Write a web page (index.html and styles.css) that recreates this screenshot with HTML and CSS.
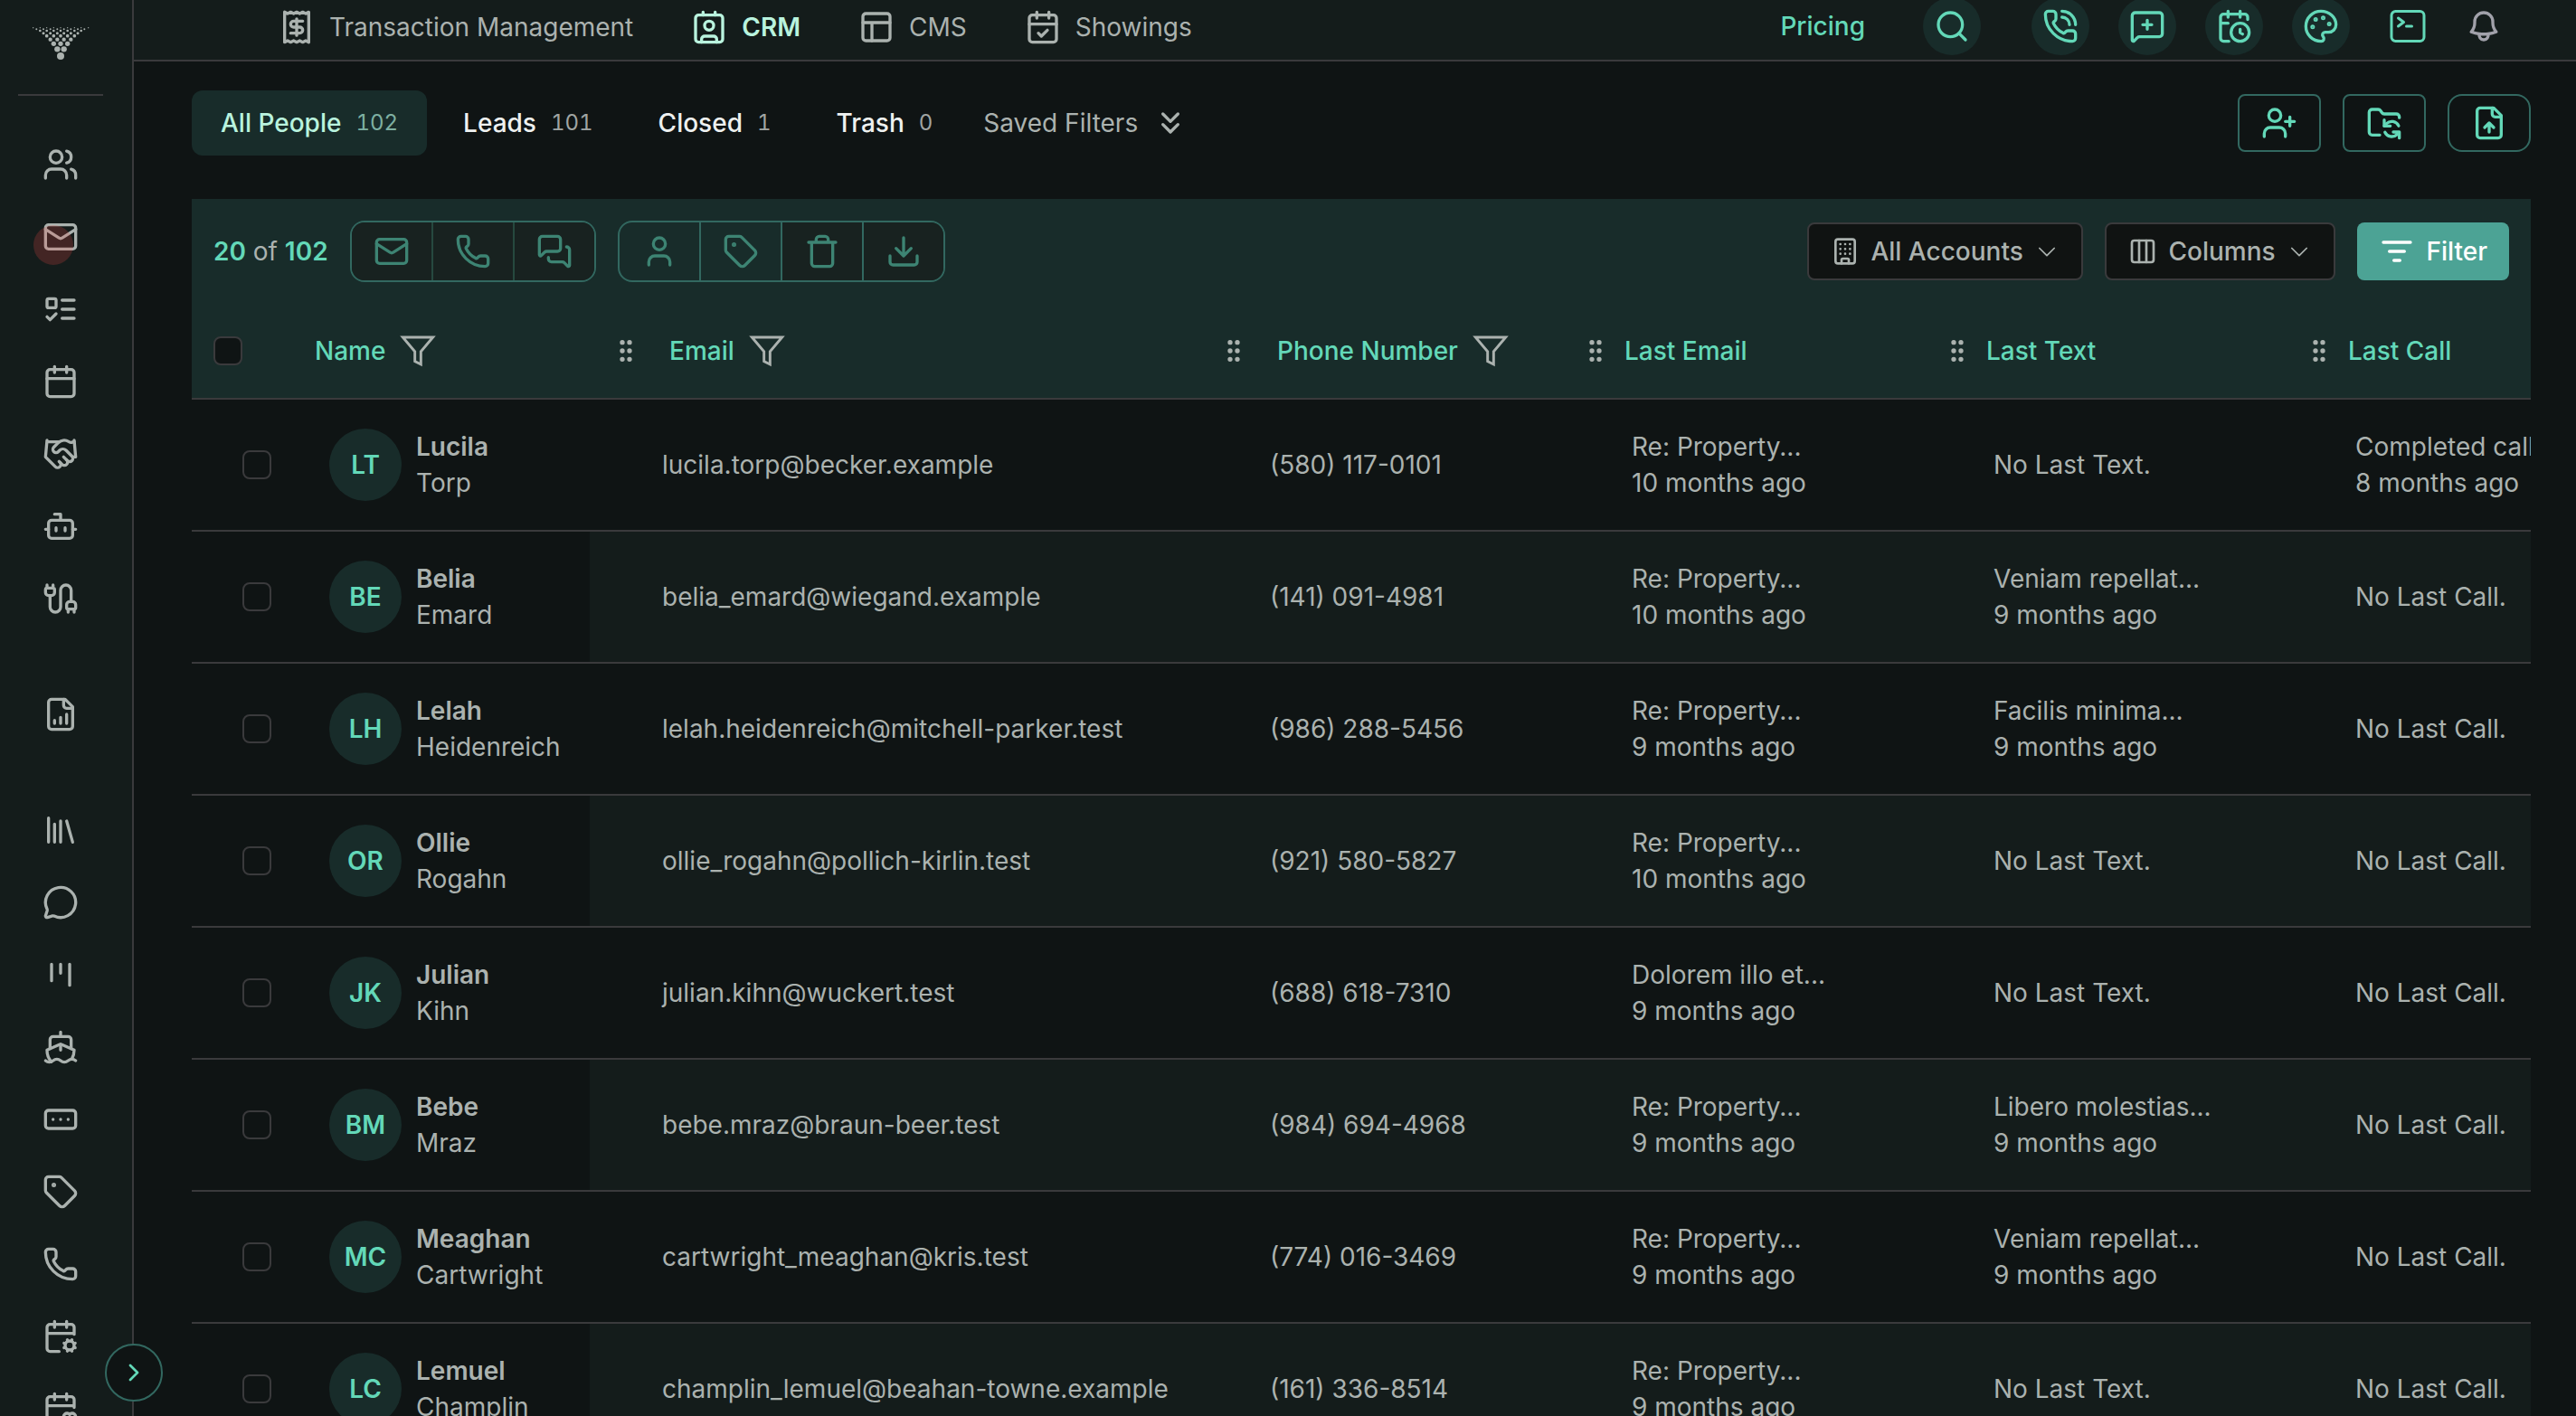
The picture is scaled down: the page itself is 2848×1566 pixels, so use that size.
FILE: index.html
```html
<!DOCTYPE html>
<html lang="en">
<head>
  <meta charset="UTF-8">
  <meta name="viewport" content="width=device-width, initial-scale=1.0">
  <title>CRM - People</title>
  <link rel="stylesheet" href="styles.css">
</head>
<body>
  <!-- icon sprite -->
  <svg class="sprite" aria-hidden="true">
    <symbol id="users" viewBox="0 0 24 24"><path d="M16 21v-2a4 4 0 0 0-4-4H6a4 4 0 0 0-4 4v2"/><circle cx="9" cy="7" r="4"/><path d="M22 21v-2a4 4 0 0 0-3-3.87M16 3.13a4 4 0 0 1 0 7.75"/></symbol>
    <symbol id="mail" viewBox="0 0 24 24"><rect x="2" y="4" width="20" height="16" rx="2"/><path d="m22 7-8.97 5.7a1.94 1.94 0 0 1-2.06 0L2 7"/></symbol>
    <symbol id="list-todo" viewBox="0 0 24 24"><rect x="3" y="5" width="6" height="6" rx="1"/><path d="m3 17 2 2 4-4M13 6h8M13 12h8M13 18h8"/></symbol>
    <symbol id="calendar" viewBox="0 0 24 24"><path d="M8 2v4M16 2v4M3 10h18"/><rect x="3" y="4" width="18" height="18" rx="2"/></symbol>
    <symbol id="handshake" viewBox="0 0 24 24"><path d="m11 17 2 2a1 1 0 1 0 3-3"/><path d="m14 14 2.5 2.5a1 1 0 1 0 3-3l-3.88-3.88a3 3 0 0 0-4.24 0l-.88.88a1 1 0 1 1-3-3l2.81-2.81a5.79 5.79 0 0 1 7.06-.87l.47.28a2 2 0 0 0 1.42.25L21 4"/><path d="m21 3 1 11h-2M3 3 2 14l6.5 6.5a1 1 0 1 0 3-3M3 4h8"/></symbol>
    <symbol id="bot" viewBox="0 0 24 24"><path d="M12 8V4H8"/><rect x="4" y="8" width="16" height="12" rx="2"/><path d="M2 14h2M20 14h2M15 13v2M9 13v2"/></symbol>
    <symbol id="cable" viewBox="0 0 24 24"><path d="M17 19a1 1 0 0 1-1-1v-2a2 2 0 0 1 2-2h2a2 2 0 0 1 2 2v2a1 1 0 0 1-1 1z"/><path d="M17 21v-2M19 14V6.5a1 1 0 0 0-7 0v11a1 1 0 0 1-7 0V10M21 21v-2M3 5V3"/><path d="M4 10a2 2 0 0 1-2-2V6a1 1 0 0 1 1-1h4a1 1 0 0 1 1 1v2a2 2 0 0 1-2 2zM7 5V3"/></symbol>
    <symbol id="file-chart" viewBox="0 0 24 24"><path d="M15 2H6a2 2 0 0 0-2 2v16a2 2 0 0 0 2 2h12a2 2 0 0 0 2-2V7Z"/><path d="M14 2v4a2 2 0 0 0 2 2h4M8 18v-2M12 18v-4M16 18v-6"/></symbol>
    <symbol id="library" viewBox="0 0 24 24"><path d="m16 6 4 14M12 6v14M8 8v12M4 4v16"/></symbol>
    <symbol id="message" viewBox="0 0 24 24"><path d="M2.992 16.342a2 2 0 0 1 .094 1.167l-1.065 3.29a1 1 0 0 0 1.236 1.168l3.413-.998a2 2 0 0 1 1.099.092 10 10 0 1 0-4.777-4.719"/></symbol>
    <symbol id="kanban" viewBox="0 0 24 24"><path d="M6 5v11M12 5v6M18 5v14"/></symbol>
    <symbol id="ship" viewBox="0 0 24 24"><path d="M12 10.189V14M12 2v3M19 13V7a2 2 0 0 0-2-2H7a2 2 0 0 0-2 2v6"/><path d="M19.38 20A11.6 11.6 0 0 0 21 14l-8.188-3.639a2 2 0 0 0-1.624 0L3 14a11.6 11.6 0 0 0 2.81 7.76"/><path d="M2 21c.6.5 1.2 1 2.5 1 2.5 0 2.5-2 5-2 1.3 0 1.9.5 2.5 1s1.2 1 2.5 1c2.5 0 2.5-2 5-2 1.3 0 1.9.5 2.5 1"/></symbol>
    <symbol id="ellipsis-box" viewBox="0 0 24 24"><rect x="2" y="6" width="20" height="12" rx="2"/><path d="M12 12h.01M17 12h.01M7 12h.01"/></symbol>
    <symbol id="tag" viewBox="0 0 24 24"><path d="M12.586 2.586A2 2 0 0 0 11.172 2H4a2 2 0 0 0-2 2v7.172a2 2 0 0 0 .586 1.414l8.704 8.704a2.426 2.426 0 0 0 3.42 0l6.58-6.58a2.426 2.426 0 0 0 0-3.42z"/><circle cx="7.5" cy="7.5" r=".5" fill="currentColor"/></symbol>
    <symbol id="phone" viewBox="0 0 24 24"><path d="M13.832 16.568a1 1 0 0 0 1.213-.303l.355-.465A2 2 0 0 1 17 15h3a2 2 0 0 1 2 2v3a2 2 0 0 1-2 2A18 18 0 0 1 2 4a2 2 0 0 1 2-2h3a2 2 0 0 1 2 2v3a2 2 0 0 1-.8 1.6l-.468.351a1 1 0 0 0-.292 1.233 14 14 0 0 0 6.392 6.384"/></symbol>
    <symbol id="phone-call" viewBox="0 0 24 24"><path d="M13 2a9 9 0 0 1 9 9M13 6a5 5 0 0 1 5 5"/><path d="M13.832 16.568a1 1 0 0 0 1.213-.303l.355-.465A2 2 0 0 1 17 15h3a2 2 0 0 1 2 2v3a2 2 0 0 1-2 2A18 18 0 0 1 2 4a2 2 0 0 1 2-2h3a2 2 0 0 1 2 2v3a2 2 0 0 1-.8 1.6l-.468.351a1 1 0 0 0-.292 1.233 14 14 0 0 0 6.392 6.384"/></symbol>
    <symbol id="calendar-cog" viewBox="0 0 24 24"><path d="m15.228 16.852-.923-.383M15.228 19.148l-.923.383M16 2v4M16.47 14.305l.382.923M16.852 20.772l-.383.924M19.148 15.228l.383-.923M19.53 21.696l-.382-.924M20.772 16.852l.924-.383M20.772 19.148l.924.383"/><path d="M21 10.592V6a2 2 0 0 0-2-2H5a2 2 0 0 0-2 2v14a2 2 0 0 0 2 2h6M3 10h18M8 2v4"/><circle cx="18" cy="18" r="3"/></symbol>
    <symbol id="calendar-heart" viewBox="0 0 24 24"><path d="M12.127 22H5a2 2 0 0 1-2-2V6a2 2 0 0 1 2-2h14a2 2 0 0 1 2 2v5.125M16 2v4M3 10h18M8 2v4"/><path d="M14.62 18.8A2.25 2.25 0 1 1 18 15.836a2.25 2.25 0 1 1 3.38 2.966l-2.626 2.856a.998.998 0 0 1-1.507 0z"/></symbol>
    <symbol id="receipt" viewBox="0 0 24 24"><path d="M4 2v20l2-1 2 1 2-1 2 1 2-1 2 1 2-1 2 1V2l-2 1-2-1-2 1-2-1-2 1-2-1-2 1Z"/><path d="M16 8h-6a2 2 0 1 0 0 4h4a2 2 0 1 1 0 4H8M12 17.5v-11"/></symbol>
    <symbol id="contact" viewBox="0 0 24 24"><path d="M16 2v2M8 2v2M7 22v-2a2 2 0 0 1 2-2h6a2 2 0 0 1 2 2v2"/><circle cx="12" cy="11" r="3"/><rect x="3" y="4" width="18" height="18" rx="2"/></symbol>
    <symbol id="panels" viewBox="0 0 24 24"><rect x="3" y="3" width="18" height="18" rx="2"/><path d="M3 9h18M9 21V9"/></symbol>
    <symbol id="calendar-check" viewBox="0 0 24 24"><path d="M8 2v4M16 2v4M3 10h18M9 16l2 2 4-4"/><rect x="3" y="4" width="18" height="18" rx="2"/></symbol>
    <symbol id="search" viewBox="0 0 24 24"><circle cx="11" cy="11" r="8"/><path d="m21 21-4.3-4.3"/></symbol>
    <symbol id="message-plus" viewBox="0 0 24 24"><path d="M22 17a2 2 0 0 1-2 2H6.828a2 2 0 0 0-1.414.586l-2.202 2.202A.71.71 0 0 1 2 21.286V5a2 2 0 0 1 2-2h16a2 2 0 0 1 2 2zM12 8v6M9 11h6"/></symbol>
    <symbol id="calendar-clock" viewBox="0 0 24 24"><path d="M16 14v2.2l1.6 1M16 2v4M21 7.5V6a2 2 0 0 0-2-2H5a2 2 0 0 0-2 2v14a2 2 0 0 0 2 2h3.5M3 10h5M8 2v4"/><circle cx="16" cy="16" r="6"/></symbol>
    <symbol id="palette" viewBox="0 0 24 24"><path d="M12 22a1 1 0 0 1 0-20 10 9 0 0 1 10 9 5 5 0 0 1-5 5h-2.25a1.75 1.75 0 0 0-1.4 2.8l.3.4a1.75 1.75 0 0 1-1.4 2.8z"/><g fill="currentColor"><circle cx="13.5" cy="6.5" r=".5"/><circle cx="17.5" cy="10.5" r=".5"/><circle cx="6.5" cy="12.5" r=".5"/><circle cx="8.5" cy="7.5" r=".5"/></g></symbol>
    <symbol id="terminal" viewBox="0 0 24 24"><path d="m6.75 7.5 3 2.25-3 2.25m4.5 0h3m-9 8.25h13.5A2.25 2.25 0 0 0 21 18V6a2.25 2.25 0 0 0-2.25-2.25H5.25A2.25 2.25 0 0 0 3 6v12a2.25 2.25 0 0 0 2.25 2.25Z"/></symbol>
    <symbol id="bell" viewBox="0 0 24 24"><path d="M14.857 17.082a23.848 23.848 0 0 0 5.454-1.31A8.967 8.967 0 0 1 18 9.75V9A6 6 0 0 0 6 9v.75a8.967 8.967 0 0 1-2.312 6.022c1.733.64 3.56 1.085 5.455 1.31m5.714 0a24.255 24.255 0 0 1-5.714 0m5.714 0a3 3 0 1 1-5.714 0"/></symbol>
    <symbol id="user-plus" viewBox="0 0 24 24"><path d="M16 21v-2a4 4 0 0 0-4-4H6a4 4 0 0 0-4 4v2M19 8v6M22 11h-6"/><circle cx="9" cy="7" r="4"/></symbol>
    <symbol id="folder-sync" viewBox="0 0 24 24"><path d="M9 20H4a2 2 0 0 1-2-2V5a2 2 0 0 1 2-2h3.9a2 2 0 0 1 1.69.9l.81 1.2a2 2 0 0 0 1.67.9H20a2 2 0 0 1 2 2v.5M12 10v4h4"/><path d="m12 14 1.535-1.605a5 5 0 0 1 8 1.5M22 22v-4h-4M22 18l-1.535 1.605a5 5 0 0 1-8-1.5"/></symbol>
    <symbol id="file-up" viewBox="0 0 24 24"><path d="M15 2H6a2 2 0 0 0-2 2v16a2 2 0 0 0 2 2h12a2 2 0 0 0 2-2V7Z"/><path d="M14 2v4a2 2 0 0 0 2 2h4M12 12v6M15 15l-3-3-3 3"/></symbol>
    <symbol id="messages" viewBox="0 0 24 24"><path d="M16 10a2 2 0 0 1-2 2H6.828a2 2 0 0 0-1.414.586l-2.202 2.202A.71.71 0 0 1 2 14.286V4a2 2 0 0 1 2-2h10a2 2 0 0 1 2 2z"/><path d="M20 9a2 2 0 0 1 2 2v10.286a.71.71 0 0 1-1.212.502l-2.202-2.202A2 2 0 0 0 17.172 19H10a2 2 0 0 1-2-2v-1"/></symbol>
    <symbol id="user" viewBox="0 0 24 24"><path d="M19 21v-2a4 4 0 0 0-4-4H9a4 4 0 0 0-4 4v2"/><circle cx="12" cy="7" r="4"/></symbol>
    <symbol id="trash" viewBox="0 0 24 24"><path d="M3 6h18M19 6v14c0 1-1 2-2 2H7c-1 0-2-1-2-2V6M8 6V4c0-1 1-2 2-2h4c1 0 2 1 2 2v2"/></symbol>
    <symbol id="download" viewBox="0 0 24 24"><path d="M12 15V3M21 15v4a2 2 0 0 1-2 2H5a2 2 0 0 1-2-2v-4M7 10l5 5 5-5"/></symbol>
    <symbol id="building" viewBox="0 0 24 24"><rect x="4" y="2" width="16" height="20" rx="2"/><path d="M9 22v-3a1 1 0 0 1 1-1h4a1 1 0 0 1 1 1v3M8 6h.01M12 6h.01M16 6h.01M8 10h.01M12 10h.01M16 10h.01M8 14h.01M12 14h.01M16 14h.01"/></symbol>
    <symbol id="columns" viewBox="0 0 24 24"><rect x="3" y="3" width="18" height="18" rx="2"/><path d="M9 3v18M15 3v18"/></symbol>
    <symbol id="chevron-down" viewBox="0 0 24 24"><path d="m5 9 7 7 7-7"/></symbol>
    <symbol id="chevrons-down" viewBox="0 0 24 24"><path d="m7 6 5 5 5-5M7 13l5 5 5-5"/></symbol>
    <symbol id="chevron-right" viewBox="0 0 24 24"><path d="m9 18 6-6-6-6"/></symbol>
    <symbol id="list-filter" viewBox="0 0 24 24"><path d="M3 6h18M7 12h10M10 18h4"/></symbol>
    <symbol id="funnel" viewBox="0 0 24 24"><path d="M22 3H2l8 9.46V19l4 2v-8.54z"/></symbol>
    <symbol id="grip" viewBox="0 0 24 24"><g fill="currentColor"><circle cx="9" cy="5" r="1"/><circle cx="9" cy="12" r="1"/><circle cx="9" cy="19" r="1"/><circle cx="15" cy="5" r="1"/><circle cx="15" cy="12" r="1"/><circle cx="15" cy="19" r="1"/></g></symbol>
  </svg>

  <div class="app">
    <aside class="sidebar">
      <a class="logo" href="#" aria-label="Home">
        <svg viewBox="47 60 192 110" fill="currentColor">
          <circle cx="143" cy="157" r="12"/>
          <circle cx="132" cy="134" r="9.500"/><circle cx="154" cy="134" r="9.500"/>
          <circle cx="120" cy="116" r="8"/><circle cx="143" cy="116" r="8"/><circle cx="166" cy="116" r="8"/>
          <circle cx="109" cy="102" r="6.500"/><circle cx="132" cy="102" r="6.500"/><circle cx="154" cy="102" r="6.500"/><circle cx="177" cy="102" r="6.500"/>
          <circle cx="97" cy="90" r="5.500"/><circle cx="120" cy="90" r="5.500"/><circle cx="143" cy="90" r="5.500"/><circle cx="166" cy="90" r="5.500"/><circle cx="189" cy="90" r="5.500"/>
          <circle cx="86" cy="81" r="4.500"/><circle cx="109" cy="81" r="4.500"/><circle cx="132" cy="81" r="4.500"/><circle cx="154" cy="81" r="4.500"/><circle cx="177" cy="81" r="4.500"/><circle cx="200" cy="81" r="4.500"/>
          <circle cx="75" cy="73" r="4"/><circle cx="97" cy="73" r="4"/><circle cx="120" cy="73" r="4"/><circle cx="143" cy="73" r="4"/><circle cx="166" cy="73" r="4"/><circle cx="189" cy="73" r="4"/><circle cx="211" cy="73" r="4"/>
          <circle cx="63" cy="68" r="3"/><circle cx="86" cy="68" r="3"/><circle cx="109" cy="68" r="3"/><circle cx="132" cy="68" r="3"/><circle cx="154" cy="68" r="3"/><circle cx="177" cy="68" r="3"/><circle cx="200" cy="68" r="3"/><circle cx="222" cy="68" r="3"/>
          <circle cx="52" cy="63" r="2"/><circle cx="75" cy="63" r="2"/><circle cx="97" cy="63" r="2"/><circle cx="120" cy="63" r="2"/><circle cx="143" cy="63" r="2"/><circle cx="166" cy="63" r="2"/><circle cx="189" cy="63" r="2"/><circle cx="211" cy="63" r="2"/><circle cx="235" cy="63" r="2"/>
        </svg>
      </a>
      <nav class="side-nav">
        <a href="#" aria-label="People"><svg class="icon"><use href="#users"/></svg></a>
        <a href="#" aria-label="Mail"><svg class="icon"><use href="#mail"/></svg><span class="badge"></span></a>
        <a href="#" aria-label="Tasks"><svg class="icon"><use href="#list-todo"/></svg></a>
        <a href="#" aria-label="Calendar"><svg class="icon"><use href="#calendar"/></svg></a>
        <a href="#" aria-label="Deals"><svg class="icon"><use href="#handshake"/></svg></a>
        <a href="#" aria-label="Assistant"><svg class="icon"><use href="#bot"/></svg></a>
        <a href="#" aria-label="Integrations"><svg class="icon"><use href="#cable"/></svg></a>
        <a class="group" href="#" aria-label="Reports"><svg class="icon"><use href="#file-chart"/></svg></a>
        <a class="group" href="#" aria-label="Library"><svg class="icon"><use href="#library"/></svg></a>
        <a href="#" aria-label="Messages"><svg class="icon"><use href="#message"/></svg></a>
        <a href="#" aria-label="Pipeline"><svg class="icon"><use href="#kanban"/></svg></a>
        <a href="#" aria-label="Campaigns"><svg class="icon"><use href="#ship"/></svg></a>
        <a href="#" aria-label="Fields"><svg class="icon"><use href="#ellipsis-box"/></svg></a>
        <a href="#" aria-label="Tags"><svg class="icon"><use href="#tag"/></svg></a>
        <a href="#" aria-label="Calls"><svg class="icon"><use href="#phone"/></svg></a>
        <a href="#" aria-label="Calendar settings"><svg class="icon"><use href="#calendar-cog"/></svg></a>
        <a href="#" aria-label="Favorite events"><svg class="icon"><use href="#calendar-heart"/></svg></a>
      </nav>
      <button class="expand" type="button" aria-label="Expand sidebar"><svg class="icon icon-sm"><use href="#chevron-right"/></svg></button>
    </aside>

    <div class="page">
      <header class="topbar">
        <nav class="top-nav">
          <a href="#"><svg class="icon"><use href="#receipt"/></svg>Transaction Management</a>
          <a class="active" href="#"><svg class="icon"><use href="#contact"/></svg>CRM</a>
          <a href="#"><svg class="icon"><use href="#panels"/></svg>CMS</a>
          <a href="#"><svg class="icon"><use href="#calendar-check"/></svg>Showings</a>
        </nav>
        <div class="top-actions">
          <a class="pricing" href="#">Pricing</a>
          <button class="round search" type="button" aria-label="Search"><svg class="icon"><use href="#search"/></svg></button>
          <button class="round" type="button" aria-label="Call"><svg class="icon"><use href="#phone-call"/></svg></button>
          <button class="round" type="button" aria-label="New message"><svg class="icon"><use href="#message-plus"/></svg></button>
          <button class="round" type="button" aria-label="Schedule"><svg class="icon"><use href="#calendar-clock"/></svg></button>
          <button class="round" type="button" aria-label="Theme"><svg class="icon"><use href="#palette"/></svg></button>
          <button class="round plain" type="button" aria-label="Console"><svg class="icon icon-lg"><use href="#terminal"/></svg></button>
          <button class="bell" type="button" aria-label="Notifications"><svg class="icon"><use href="#bell"/></svg></button>
        </div>
      </header>

      <main class="content">
        <div class="views">
          <div class="tabs">
            <button class="tab active" type="button">All People <span class="count">102</span></button>
            <button class="tab" type="button">Leads <span class="count">101</span></button>
            <button class="tab" type="button">Closed <span class="count">1</span></button>
            <button class="tab" type="button">Trash <span class="count">0</span></button>
            <button class="saved" type="button">Saved Filters <svg class="icon"><use href="#chevrons-down"/></svg></button>
          </div>
          <div class="page-actions">
            <button type="button" aria-label="Add person"><svg class="icon"><use href="#user-plus"/></svg></button>
            <button type="button" aria-label="Sync folder"><svg class="icon"><use href="#folder-sync"/></svg></button>
            <button class="rounded" type="button" aria-label="Import file"><svg class="icon"><use href="#file-up"/></svg></button>
          </div>
        </div>

        <section class="people">
          <div class="toolbar">
            <p class="total"><b>20</b> of <b>102</b></p>
            <div class="btn-group dim">
              <button type="button" aria-label="Email selected"><svg class="icon"><use href="#mail"/></svg></button>
              <button type="button" aria-label="Call selected"><svg class="icon"><use href="#phone"/></svg></button>
              <button type="button" aria-label="Text selected"><svg class="icon"><use href="#messages"/></svg></button>
            </div>
            <div class="btn-group">
              <button class="clear" type="button" aria-label="Assign"><svg class="icon"><use href="#user"/></svg></button>
              <button class="clear" type="button" aria-label="Tag"><svg class="icon"><use href="#tag"/></svg></button>
              <button type="button" aria-label="Delete"><svg class="icon"><use href="#trash"/></svg></button>
              <button type="button" aria-label="Download"><svg class="icon"><use href="#download"/></svg></button>
            </div>
            <div class="toolbar-right">
              <label class="dropdown">
                <svg class="icon icon-sm"><use href="#building"/></svg>
                <select aria-label="Accounts"><option>All Accounts</option></select>
                <svg class="icon caret"><use href="#chevron-down"/></svg>
              </label>
              <label class="dropdown">
                <svg class="icon icon-sm"><use href="#columns"/></svg>
                <select aria-label="Columns"><option>Columns</option></select>
                <svg class="icon caret"><use href="#chevron-down"/></svg>
              </label>
              <button class="filter-btn" type="button"><svg class="icon"><use href="#list-filter"/></svg>Filter</button>
            </div>
          </div>

          <table>
            <colgroup>
              <col class="col-name"><col class="col-email"><col class="col"><col class="col"><col class="col"><col class="col">
            </colgroup>
            <thead>
              <tr>
                <th><div class="head head-name"><input type="checkbox" aria-label="Select all"><span>Name</span><svg class="icon funnel"><use href="#funnel"/></svg></div></th>
                <th><div class="head wide"><svg class="icon icon-sm"><use href="#grip"/></svg><span>Email</span><svg class="icon funnel"><use href="#funnel"/></svg></div></th>
                <th><div class="head wide"><svg class="icon icon-sm"><use href="#grip"/></svg><span>Phone Number</span><svg class="icon funnel"><use href="#funnel"/></svg></div></th>
                <th><div class="head"><svg class="icon icon-sm"><use href="#grip"/></svg><span>Last Email</span></div></th>
                <th><div class="head"><svg class="icon icon-sm"><use href="#grip"/></svg><span>Last Text</span></div></th>
                <th><div class="head"><svg class="icon icon-sm"><use href="#grip"/></svg><span>Last Call</span></div></th>
              </tr>
            </thead>
            <tbody>
              <tr>
                <td><div class="person"><input type="checkbox" aria-label="Select Lucila Torp"><span class="avatar">LT</span><span><b>Lucila</b><br>Torp</span></div></td>
                <td>lucila.torp@becker.example</td>
                <td>(580) 117-0101</td>
                <td>Re: Property...<br>10 months ago</td>
                <td>No Last Text.</td>
                <td>Completed call<br>8 months ago</td>
              </tr>
              <tr>
                <td><div class="person"><input type="checkbox" aria-label="Select Belia Emard"><span class="avatar">BE</span><span><b>Belia</b><br>Emard</span></div></td>
                <td>belia_emard@wiegand.example</td>
                <td>(141) 091-4981</td>
                <td>Re: Property...<br>10 months ago</td>
                <td>Veniam repellat...<br>9 months ago</td>
                <td>No Last Call.</td>
              </tr>
              <tr>
                <td><div class="person"><input type="checkbox" aria-label="Select Lelah Heidenreich"><span class="avatar">LH</span><span><b>Lelah</b><br>Heidenreich</span></div></td>
                <td>lelah.heidenreich@mitchell-parker.test</td>
                <td>(986) 288-5456</td>
                <td>Re: Property...<br>9 months ago</td>
                <td>Facilis minima...<br>9 months ago</td>
                <td>No Last Call.</td>
              </tr>
              <tr>
                <td><div class="person"><input type="checkbox" aria-label="Select Ollie Rogahn"><span class="avatar">OR</span><span><b>Ollie</b><br>Rogahn</span></div></td>
                <td>ollie_rogahn@pollich-kirlin.test</td>
                <td>(921) 580-5827</td>
                <td>Re: Property...<br>10 months ago</td>
                <td>No Last Text.</td>
                <td>No Last Call.</td>
              </tr>
              <tr>
                <td><div class="person"><input type="checkbox" aria-label="Select Julian Kihn"><span class="avatar">JK</span><span><b>Julian</b><br>Kihn</span></div></td>
                <td>julian.kihn@wuckert.test</td>
                <td>(688) 618-7310</td>
                <td>Dolorem illo et...<br>9 months ago</td>
                <td>No Last Text.</td>
                <td>No Last Call.</td>
              </tr>
              <tr>
                <td><div class="person"><input type="checkbox" aria-label="Select Bebe Mraz"><span class="avatar">BM</span><span><b>Bebe</b><br>Mraz</span></div></td>
                <td>bebe.mraz@braun-beer.test</td>
                <td>(984) 694-4968</td>
                <td>Re: Property...<br>9 months ago</td>
                <td>Libero molestias...<br>9 months ago</td>
                <td>No Last Call.</td>
              </tr>
              <tr>
                <td><div class="person"><input type="checkbox" aria-label="Select Meaghan Cartwright"><span class="avatar">MC</span><span><b>Meaghan</b><br>Cartwright</span></div></td>
                <td>cartwright_meaghan@kris.test</td>
                <td>(774) 016-3469</td>
                <td>Re: Property...<br>9 months ago</td>
                <td>Veniam repellat...<br>9 months ago</td>
                <td>No Last Call.</td>
              </tr>
              <tr>
                <td><div class="person"><input type="checkbox" aria-label="Select Lemuel Champlin"><span class="avatar">LC</span><span><b>Lemuel</b><br>Champlin</span></div></td>
                <td>champlin_lemuel@beahan-towne.example</td>
                <td>(161) 336-8514</td>
                <td>Re: Property...<br>9 months ago</td>
                <td>No Last Text.</td>
                <td>No Last Call.</td>
              </tr>
            </tbody>
          </table>
        </section>
      </main>
    </div>
  </div>
</body>
</html>
```

FILE: styles.css
```css
:root {
  --bg: #0f1414;
  --panel: #141c1b;
  --teal: #182c2a;
  --accent: #63d8b8;
  --line: #3a3a3c;
  --outline: #326860;
  --text: #abb2af;
}
* {
  box-sizing: border-box;
}
body {
  margin: 0;
  background: var(--bg);
  color: var(--text);
  font-family: Inter, "Liberation Sans", sans-serif;
  font-size: 28px;
  line-height: 40px;
}
a {
  color: inherit;
  text-decoration: none;
}
button,
select {
  padding: 0;
  border: none;
  background: none;
  color: inherit;
  font: inherit;
  cursor: pointer;
}
.sprite {
  display: none;
}
.icon {
  flex: none;
  display: block;
  width: 40px;
  height: 40px;
  fill: none;
  stroke: currentColor;
  stroke-width: 2;
  stroke-linecap: round;
  stroke-linejoin: round;
}
.icon-sm {
  width: 32px;
  height: 32px;
}
.icon-lg {
  width: 48px;
  height: 48px;
  stroke-width: 1.5;
}
.app {
  display: flex;
  height: 100vh;
  overflow: hidden;
}

/* sidebar */
.sidebar {
  position: relative;
  flex: none;
  width: 148px;
  padding-right: 12px;
  background: var(--panel);
  border-right: 2px solid var(--line);
}
.logo {
  display: flex;
  justify-content: center;
  height: 106px;
  margin: 0 20px;
  padding-top: 29px;
  border-bottom: 2px solid var(--line);
}
.logo svg {
  width: 64px;
  height: 38px;
}
.side-nav {
  display: flex;
  flex-direction: column;
  height: calc(100vh - 106px);
  padding-top: 36px;
  overflow: hidden;
}
.side-nav a {
  position: relative;
  flex: none;
  display: flex;
  align-items: center;
  justify-content: center;
  height: 80px;
}
.side-nav .group {
  margin-top: 48px;
}
.badge {
  position: absolute;
  top: 27px;
  left: 37px;
  width: 44px;
  height: 44px;
  border-radius: 50%;
  background: rgba(235, 75, 70, 0.22);
}
.expand {
  position: absolute;
  right: -34px;
  bottom: 16px;
  z-index: 2;
  display: flex;
  align-items: center;
  justify-content: center;
  width: 64px;
  height: 64px;
  border: 2px solid var(--outline);
  border-radius: 50%;
  background: var(--bg);
  color: var(--accent);
}

/* top bar */
.page {
  flex: 1;
  min-width: 0;
}
.topbar {
  display: flex;
  align-items: center;
  justify-content: space-between;
  height: 68px;
  padding: 0 82px 8px 160px;
  background: var(--panel);
  border-bottom: 2px solid var(--line);
}
.top-nav,
.top-actions {
  display: flex;
  align-items: center;
}
.top-nav {
  gap: 64px;
  padding-top: 2px;
}
.top-nav a {
  display: flex;
  align-items: center;
  gap: 16px;
}
.top-nav .active {
  color: #b9f3de;
  font-weight: 600;
}
.top-actions {
  gap: 32px;
  color: var(--accent);
}
.pricing {
  margin-right: 32px;
  font-weight: 500;
}
.round {
  display: flex;
  align-items: center;
  justify-content: center;
  width: 64px;
  height: 64px;
  border-radius: 50%;
  background: var(--teal);
}
.round.search {
  margin-right: 24px;
}
.round.plain {
  background: none;
}
.bell {
  color: #a1a1aa;
}

/* views and page actions */
.content {
  padding: 32px 50px 0 64px;
}
.views,
.tabs,
.page-actions {
  display: flex;
  align-items: center;
}
.views {
  justify-content: space-between;
  margin-bottom: 48px;
}
.tabs {
  gap: 8px;
}
.tab {
  display: flex;
  align-items: center;
  gap: 16px;
  height: 72px;
  padding: 0 32px;
  border-radius: 12px;
  color: #eef1f0;
  font-weight: 500;
}
.tab.active {
  background: var(--teal);
  color: #b9f3de;
}
.count {
  color: #a0a5a3;
  font-size: 24px;
  font-weight: 400;
  font-variant-numeric: tabular-nums;
}
.active .count {
  color: #7eb0a2;
}
.saved {
  display: flex;
  align-items: center;
  gap: 16px;
  padding: 0 16px;
}
.page-actions {
  gap: 24px;
  color: var(--accent);
}
.page-actions button {
  display: flex;
  align-items: center;
  justify-content: center;
  width: 92px;
  height: 64px;
  border: 2px solid var(--outline);
  border-radius: 8px;
}
.page-actions .rounded {
  border-radius: 16px;
}

/* people table */
.people {
  overflow: hidden;
}
.toolbar {
  display: flex;
  align-items: center;
  gap: 24px;
  height: 116px;
  padding: 0 24px;
  background: var(--teal);
}
.total {
  margin: 0;
}
.total b {
  color: var(--accent);
  font-weight: 600;
}
.btn-group {
  display: flex;
  height: 68px;
  overflow: hidden;
  border: 2px solid var(--outline);
  border-radius: 16px;
  color: #3d8473;
}
.btn-group button {
  display: flex;
  align-items: center;
  justify-content: center;
  width: 90px;
  background: #182220;
  border-right: 2px solid var(--outline);
}
.btn-group button:last-child {
  width: 88px;
  border-right: none;
}
.btn-group.dim button {
  border-color: #26493f;
}
.btn-group .clear {
  background: none;
}
.toolbar-right {
  display: flex;
  gap: 24px;
  margin-left: auto;
}
.dropdown {
  display: flex;
  align-items: center;
  gap: 12px;
  height: 64px;
  padding: 0 24px;
  border: 2px solid var(--line);
  border-radius: 8px;
  background: #101312;
  font-weight: 500;
}
.dropdown select {
  appearance: none;
  outline: none;
}
.dropdown .caret {
  width: 28px;
  height: 28px;
  stroke-width: 1.5;
}
.filter-btn {
  display: flex;
  align-items: center;
  gap: 12px;
  height: 64px;
  padding: 0 24px;
  border-radius: 8px;
  background: #4ca395;
  color: #fff;
  font-weight: 500;
}
input[type="checkbox"] {
  appearance: none;
  flex: none;
  width: 32px;
  height: 32px;
  margin: 0;
  border: 2px solid var(--line);
  border-radius: 8px;
  background: var(--bg);
}
table {
  width: 2712px;
  table-layout: fixed;
  border-collapse: separate;
  border-spacing: 0;
}
.col-name {
  width: 440px;
}
.col-email {
  width: 672px;
}
.col {
  width: 400px;
}
th,
td {
  padding: 0;
  border-bottom: 2px solid var(--line);
  text-align: left;
}
th {
  height: 106px;
  background: var(--teal);
  font-weight: 400;
}
.head {
  display: flex;
  align-items: center;
  gap: 16px;
  padding-left: 24px;
}
.head span {
  color: var(--accent);
  font-weight: 500;
}
.head.wide > .icon-sm {
  margin-right: 16px;
}
.head-name input {
  margin-right: 64px;
}
.head .funnel {
  stroke-width: 1.75;
  stroke-linejoin: miter;
}
td {
  height: 146px;
  padding-left: 80px;
  white-space: nowrap;
}
td:first-child {
  padding-left: 56px;
}
tbody tr:nth-child(even) td:not(:first-child) {
  background: var(--panel);
}
.person {
  display: flex;
  align-items: center;
  gap: 16px;
}
.person input {
  margin-right: 48px;
}
.person b {
  font-weight: 600;
}
.avatar {
  display: flex;
  align-items: center;
  justify-content: center;
  width: 80px;
  height: 80px;
  border-radius: 50%;
  background: var(--teal);
  color: var(--accent);
  font-weight: 600;
}
```
